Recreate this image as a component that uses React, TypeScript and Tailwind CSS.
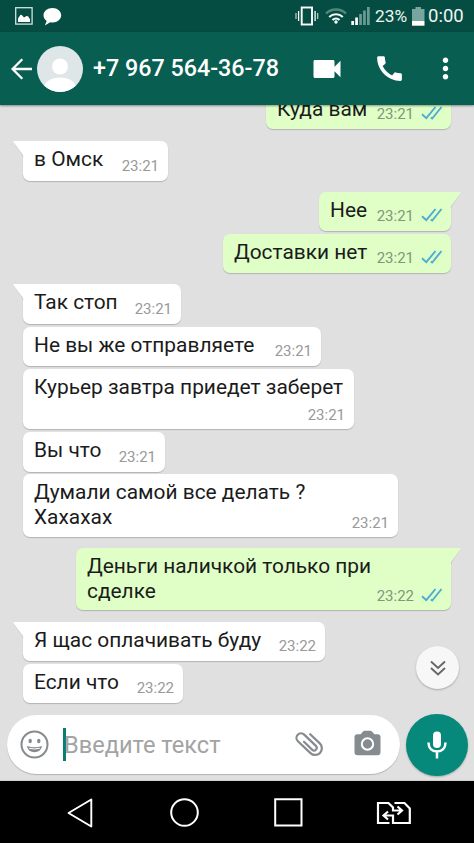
import { clsx } from "clsx";
import { MdCall, MdMoreVert, MdVideocam } from "react-icons/md";

type Message = {
  text: string;
  time: string;
  box: string;
  own?: boolean;
  tail?: boolean;
  tall?: boolean;
};

const messages: Message[] = [
  { text: "Куда вам", time: "23:21", own: true, box: "-mt-[14px] w-[185px] h-[38px]" },
  { text: "в Омск", time: "23:21", tail: true, box: "mt-3 w-[145px] h-[40px]" },
  { text: "Нее", time: "23:21", own: true, tail: true, box: "mt-[11px] w-[132px] h-[39px]" },
  { text: "Доставки нет", time: "23:21", own: true, box: "mt-[3px] w-[228px] h-[39px]" },
  { text: "Так стоп", time: "23:21", tail: true, box: "mt-[11px] w-[158px] h-[40px]" },
  { text: "Не вы же отправляете", time: "23:21", box: "mt-[3px] w-[298px] h-[39px]" },
  { text: "Курьер завтра приедет заберет", time: "23:21", tall: true, box: "mt-[3px] w-[331px] h-[60px]" },
  { text: "Вы что", time: "23:21", box: "mt-[3px] w-[142px] h-[40px]" },
  { text: "Думали самой все делать ?\nХахахах", time: "23:21", tall: true, box: "mt-[2px] w-[375px] h-[63px]" },
  { text: "Деньги наличкой только при\nсделке", time: "23:22", own: true, tail: true, tall: true, box: "mt-[11px] w-[375px] h-[62px]" },
  { text: "Я щас оплачивать буду", time: "23:22", tail: true, box: "mt-[12px] w-[302px] h-[39px]" },
  { text: "Если что", time: "23:22", box: "mt-[3px] w-[160px] h-[39px]" },
];

const StatusBar = () => (
  <div className="flex h-8 shrink-0 items-center bg-[#054d42] pl-[15px] text-[#eef6f4]">
    <svg width="18" height="18" viewBox="0 0 18 18">
      <rect x="0.7" y="0.7" width="16.4" height="16.4" fill="none" stroke="#cfe3df" strokeWidth="1.3" />
      <path d="M3 15v-3.500l2.500-3.700 1.300.2 2.200 2.500 2.500-1.500 1.500.3 2 3V15z" fill="#fff" />
    </svg>
    <svg className="ml-[10px] mt-px" width="19" height="18" viewBox="0 0 19 18">
      <path d="M9.500 0C4.500 0 .5 3.200 .5 7.300c0 2.400 1.200 4.300 3.200 5.600L1.800 17.500l5.400-3.200c.7.1 1.500.2 2.300.2 5 0 8.700-3.200 8.700-7.200S14.500 0 9.500 0z" fill="#fff" />
    </svg>
    <svg className="ml-[233px]" width="24" height="20" viewBox="0 0 24 20">
      <g fill="none" stroke="#fff">
        <rect x="6.7" y="1.5" width="10.3" height="17" strokeWidth="1.9" />
        <path d="M3.600 5v10M20.100 5v10" strokeWidth="1.3" />
        <path d="M1 7v6M22.700 7v6" strokeWidth="1.2" opacity="0.75" />
      </g>
    </svg>
    <svg className="ml-[6px]" width="22" height="16" viewBox="0 0 22 16">
      <g fill="none">
        <path d="M1 5.500a14.500 14.500 0 0 1 20 0" stroke="#4f8a80" strokeWidth="2.4" />
        <path d="M4.200 8.900a10 10 0 0 1 13.600 0M7.500 12a5.200 5.200 0 0 1 7 0" stroke="#fff" strokeWidth="2.1" />
      </g>
      <circle cx="11" cy="14" r="1.7" fill="#fff" />
    </svg>
    <svg className="ml-[4px]" width="19" height="18" viewBox="0 0 19 18">
      <path d="M.3 14h2.700v4H.3zM4.200 10.500h2.700V18H4.200z" fill="#fff" />
      <path d="M8.200 7h2.700v11H8.200zM12.100 3.500h2.700V18h-2.700zM16 0h2.700v18H16z" fill="#6b9c94" />
    </svg>
    <span className="ml-[5px] mt-px w-[32px] whitespace-nowrap text-[17.3px]">23%</span>
    <svg className="ml-[5px]" width="13" height="19" viewBox="0 0 13 19">
      <path d="M3.500 0h5.500v2h3.500v12H0V2h3.500z" fill="#78a59d" />
      <path d="M0 14h12.500v4.700H0z" fill="#fff" />
    </svg>
    <span className="ml-[3px] mt-px whitespace-nowrap text-[18.500px]">0:00</span>
  </div>
);

const Header = () => (
  <header className="relative z-10 flex h-[73px] shrink-0 items-center bg-[#075e51] pl-[10px] pr-[12px] text-white shadow-[0_1px_2px_rgba(0,0,0,0.4)]">
    <svg width="22" height="22" viewBox="0 0 22 22" fill="none" stroke="currentColor" strokeWidth="2.3">
      <path d="M22 11H2.500M12.300 1.300 2.600 11l9.700 9.700" />
    </svg>
    <svg className="ml-[5px]" width="46" height="46" viewBox="0 0 46 46">
      <clipPath id="avatar">
        <circle cx="23" cy="23" r="23" />
      </clipPath>
      <g clipPath="url(#avatar)">
        <path d="M0 0h46v46H0z" fill="#dfe6e8" />
        <circle cx="23" cy="20.5" r="8" fill="#fff" />
        <ellipse cx="23" cy="42" rx="16" ry="10.5" fill="#fff" />
      </g>
    </svg>
    <h1 className="ml-[10px] whitespace-nowrap text-[23.3px] font-medium">+7 967 564-36-78</h1>
    <MdVideocam className="ml-auto" size={36} />
    <MdCall className="ml-[28px]" size={33} />
    <MdMoreVert className="ml-[23px]" size={33} />
  </header>
);

const Ticks = () => (
  <svg className="mb-[3px] ml-[7px]" width="22" height="14" viewBox="0 0 22 14" fill="none" stroke="#4aaed0" strokeWidth="1.9">
    <path d="M1 8.200l4.300 4L14.500 1M9.800 11.500l1.400 1L20.500 1" />
  </svg>
);

const Tail = ({ own }: { own?: boolean }) => (
  <svg
    className={clsx("absolute top-0", own ? "-right-[10px] -scale-x-100" : "-left-[10px]")}
    width="12"
    height="16"
    viewBox="0 0 12 16"
  >
    <path d="M1 1.500 10 14.500V16" fill="none" stroke="#c4c4c4" strokeWidth="1" />
    <path d="M1 0h11v15.500h-2V14L.5 1.200Q0 0 1 0z" fill={own ? "#dfffc7" : "#fff"} />
  </svg>
);

const Bubble = ({ text, time, own, tail, tall, box }: Message) => (
  <div
    className={clsx(
      "relative grid shrink-0 rounded-[7px] pl-[11px] pt-[6px] shadow-[0_1px_1px_rgba(0,0,0,0.2)]",
      own ? "self-end bg-[#dfffc7] pr-[8px]" : "self-start bg-white pr-[9px]",
      tail && (own ? "rounded-tr-none" : "rounded-tl-none"),
      box
    )}
  >
    {tail && <Tail own={own} />}
    <p className="col-start-1 row-start-1 whitespace-pre text-[20.9px] leading-[25px] text-[#1b1b1b]">{text}</p>
    <div
      className={clsx(
        "col-start-1 row-start-1 flex items-end self-end justify-self-end",
        tall ? "mb-[5px]" : "mb-[6px]"
      )}
    >
      <span className={clsx("text-[15px] leading-[18px]", own ? "text-[#82967a]" : "text-[#999]")}>{time}</span>
      {own && <Ticks />}
    </div>
  </div>
);

const InputBar = () => (
  <div className="mt-auto flex h-[65px] shrink-0 items-start pl-[7px]">
    <div className="flex h-[59px] w-[393px] items-center rounded-full bg-white pl-[13px] shadow-[0_1px_1px_rgba(0,0,0,0.2)]">
      <svg width="29" height="29" viewBox="0 0 29 29">
        <circle cx="14.5" cy="14.5" r="13" fill="none" stroke="#858b8e" strokeWidth="2" />
        <ellipse cx="10.2" cy="11" rx="1.7" ry="2.3" fill="#858b8e" />
        <ellipse cx="18.8" cy="11" rx="1.7" ry="2.3" fill="#858b8e" />
        <path d="M7 16q7.500 2.500 15 0c-.8 4.200-3.600 6.200-7.500 6.200S7.800 20.200 7 16z" fill="#858b8e" />
        <path d="M9.200 18.300q5.300 1.300 10.600 0" stroke="#fff" strokeWidth="1" fill="none" />
      </svg>
      <span className="ml-[14px] h-[33px] w-[3px] bg-[#087f6e]" />
      <span className="-ml-[2px] mt-[2px] whitespace-nowrap text-[23.6px] text-[#a3a3a3]">Введите текст</span>
      <div className="ml-auto mr-[19px] flex items-center gap-[31px]">
        <svg width="28" height="27" viewBox="0 0 28 27" fill="none" stroke="#858b8e" strokeWidth="2.2" strokeLinecap="round">
          <path d="M15.200 3.200l9.600 9.200a6.700 6.700 0 0 1-9.300 9.700L2.900 10.200a4.500 4.500 0 0 1 6.300-6.600l11.900 11.500a2.700 2.700 0 0 1-3.800 3.800L9 10.800" />
        </svg>
        <svg className="mb-[3px]" width="27" height="26" viewBox="0 0 27 26">
          <path d="M9 1.500Q9.600.8 10.500.8h6q.9 0 1.500.7l2.300 2.800h3.200q3 0 3 3v15q0 3-3 3H3.500q-3 0-3-3v-15q0-3 3-3h3.200z" fill="#858b8e" />
          <circle cx="13.5" cy="14" r="5.7" fill="none" stroke="#fff" strokeWidth="2" />
        </svg>
      </div>
    </div>
    <button className="-mt-px ml-[6px] flex h-[62px] w-[62px] items-center justify-center rounded-full bg-[#06897b] shadow-[0_1px_2px_rgba(0,0,0,0.25)]">
      <svg width="20" height="28" viewBox="0 0 20 28">
        <rect x="6" y="0.5" width="8" height="16.5" rx="4" fill="#fff" />
        <path d="M1.500 11.500c0 5.500 3.500 9 8.500 9s8.500-3.500 8.500-9M10 20.500V27.500" fill="none" stroke="#fff" strokeWidth="2.5" />
      </svg>
    </button>
  </div>
);

const NavBar = () => (
  <nav className="flex h-[62px] shrink-0 items-center bg-black pl-[67px]">
    <svg className="mt-px" width="26" height="30" viewBox="0 0 26 30" fill="none" stroke="#fff" strokeWidth="1.9" strokeLinejoin="round">
      <path d="M24.300 1.500v27L1.500 15z" />
    </svg>
    <svg className="ml-[77px] mt-px" width="29" height="29" viewBox="0 0 29 29" fill="none" stroke="#fff" strokeWidth="2">
      <circle cx="14.5" cy="14.5" r="13.3" />
    </svg>
    <svg className="ml-[75px] mt-px" width="29" height="29" viewBox="0 0 29 29" fill="none" stroke="#fff" strokeWidth="2">
      <path d="M1.200 1.200h26.300v26.300H1.200z" />
    </svg>
    <svg className="ml-[73px] mt-[2px]" width="36" height="24" viewBox="0 0 36 24" fill="none" stroke="#fff" strokeWidth="2.2">
      <path d="M13.500 22H2V2h10.500l4.500 4.500V9.500h8M21.500 5.500l4.500 4-4.500 4M18.500 2H28.500l5.300 5.500V22H17v-7.500H8M12 10.500l-4.500 4 4.500 4" />
    </svg>
  </nav>
);

export default function App() {
  return (
    <div className="flex h-[843px] w-[474px] flex-col overflow-hidden bg-[#e0e0e0] font-['Roboto','Noto_Sans',sans-serif]">
      <StatusBar />
      <Header />
      <main className="relative flex min-h-0 flex-1 flex-col overflow-hidden border-b border-[#d0d0d0]">
        <div className="flex flex-col pl-[23px] pr-[23px]">
          {messages.map((message) => (
            <Bubble key={message.text} {...message} />
          ))}
        </div>
        <button className="absolute right-[15px] top-[541px] flex h-[43px] w-[43px] items-center justify-center rounded-full bg-[#f7f7f7] shadow-[0_1px_2px_rgba(0,0,0,0.25)]">
          <svg width="16" height="16" viewBox="0 0 16 16" fill="none" stroke="#666" strokeWidth="1.9">
            <path d="M1 1.500 8 8l7-6.500M1 8l7 6.500L15 8" />
          </svg>
        </button>
        <InputBar />
      </main>
      <NavBar />
    </div>
  );
}
